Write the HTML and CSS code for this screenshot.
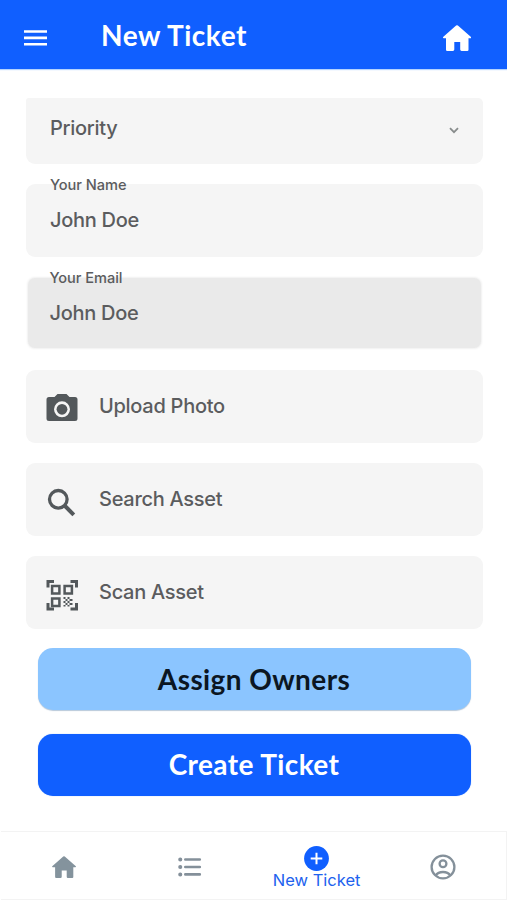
FILE: index.html
```html
<!DOCTYPE html>
<html lang="en">
<head>
<meta charset="utf-8">
<title>New Ticket</title>
<link rel="stylesheet" href="styles.css">
</head>
<body>
<header class="topbar">
  <svg class="menu" viewBox="0 0 23 16" fill="#fff"><path d="M0 .2h23v2.6H0zM0 6.6h23v2.6H0zM0 13h23v2.6H0z"/></svg>
  <h1 class="title">New Ticket</h1>
  <svg class="home" viewBox="0 0 28 26"><path fill="#fff" d="M13.1.6Q14 0 14.9.6L28 12.1Q28.5 13 27.4 13.2H25.5V24.8Q25.5 26 24.3 26H18.6Q17.2 26 17.2 24.6V17H11.3V24.6Q11.3 26 9.9 26H4.2Q3 26 3 24.8V13.2H.7Q-.4 13 .1 12.1Z"/></svg>
</header>
<main class="form">
  <div class="field select"><span>Priority</span>
    <svg class="chevron" viewBox="0 0 10 7"><path d="M1 1.2l4 4 4-4" fill="none" stroke="#888c8c" stroke-width="1.8"/></svg>
  </div>
  <div class="field"><label class="label">Your Name</label><span>John Doe</span></div>
  <div class="field active"><label class="label">Your Email</label><span>John Doe</span></div>
  <div class="field action upload">
    <svg class="icon" viewBox="0 0 32 32" fill="#53585b"><path fill-rule="evenodd" d="M11.5 2h9l3 3H29a2.500 2.500 0 0 1 2.500 2.500v19a2.500 2.500 0 0 1-2.500 2.500H3a2.500 2.500 0 0 1-2.500-2.500v-19A2.500 2.500 0 0 1 3 5h5.500zM16 9.300a8 8 0 1 0 0 16 8 8 0 0 0 0-16z"/><circle cx="16" cy="17.300" r="5.400"/></svg>
    <span>Upload Photo</span>
  </div>
  <div class="field action search">
    <svg class="icon" viewBox="0 0 32 32" fill="none" stroke="#53585b"><circle cx="12.300" cy="12.300" r="8.800" stroke-width="3.300"/><path d="M18.500 18.500l9.300 9.300" stroke-width="4"/></svg>
    <span>Search Asset</span>
  </div>
  <div class="field action scan">
    <svg class="icon" viewBox="0 0 32 32" fill="none" stroke="#53585b"><path stroke-width="3" d="M2 8.500V2.500h6M24.500 2.500h6v6M2 24v6h6M24.500 30h6v-6"/><path stroke-width="2.500" d="M6.100 7.100h7.300v7.300H6.100zM18.600 7.100h7.300v7.300h-7.300zM6.100 19.600h7.300v7.300H6.100z"/><path fill="#53585b" stroke="none" d="M17.500 18h2v2h-2zM21.500 18h2v2h-2zM19.500 20h2v2h-2zM23.500 20h3v2h-3zM17.500 22h2v2h-2zM21.500 22h2v2h-2zM19.500 24h2v2h-2zM23.500 24h3v2h-3zM17.500 26h2v1.500h-2zM21.500 26h2v1.500h-2z"/></svg>
    <span>Scan Asset</span>
  </div>
  <button class="button assign">Assign Owners</button>
  <button class="button create">Create Ticket</button>
</main>
<nav class="tabs">
  <div class="tab"><svg class="tab-home" viewBox="0 0 28 26"><path fill="#84939d" d="M13.100.6Q14 0 14.900.6L28 12.100Q28.500 13 27.400 13.200H25V24.800Q25 26 23.800 26H18.600Q17.200 26 17.200 24.600V17H11.300V24.600Q11.300 26 9.900 26H4.700Q3.500 26 3.500 24.800V13.200H.7Q-.4 13 .1 12.100Z"/></svg></div>
  <div class="tab"><svg class="tab-list" viewBox="0 0 24 20" fill="none" stroke="#84909a" stroke-linecap="round"><path stroke-width="2.600" d="M7.300 2.500h14.500M7.300 10h14.500M7.300 17.400h14.500"/><path stroke-width="4" d="M2.200 2.500h.1M2.200 10h.1M2.200 17.400h.1"/></svg></div>
  <div class="tab current"><svg class="tab-plus" viewBox="0 0 25 25"><circle cx="12.500" cy="12.500" r="12.400" fill="#105fff"/><path d="M12.500 6.700v11.600M6.700 12.500h11.600" stroke="#fff" stroke-width="2"/></svg><span>New Ticket</span></div>
  <div class="tab"><svg class="tab-user" viewBox="0 0 26 26" fill="none" stroke="#84909a" stroke-width="2.300"><circle cx="13" cy="13" r="11.400"/><circle cx="13" cy="9.700" r="3.400"/><path d="M5.500 21.500q2.500-3.500 7.500-3.500t7.500 3.500"/></svg></div>
</nav>
</body>
</html>
```
FILE: styles.css
```css
* { box-sizing: border-box; }
body {
  margin: 0;
  height: 900px;
  display: flex;
  flex-direction: column;
  background: #fff;
  color: #5b5c5e;
  font: 500 20px/24px Inter, sans-serif;
  letter-spacing: -.28px;
  overflow: hidden;
}
svg { display: block; flex: none; }
.topbar {
  height: 69px;
  flex: none;
  display: flex;
  align-items: flex-start;
  padding: 0 36px 0 23.500px;
  background: #105fff;
  box-shadow: 0 1px 1px #b5d4ff;
}
.menu { width: 23px; height: 16px; margin-top: 30px; }
.title {
  margin: 18px auto 0 54.500px;
  color: #fff;
  font: 700 28px/34px Lato, sans-serif;
  letter-spacing: .55px;
  white-space: nowrap;
}
.home { width: 28px; height: 26px; margin-top: 25px; }
.form {
  flex: 1;
  padding: 29px 24px 0 25.500px;
  display: flex;
  flex-direction: column;
}
.field {
  position: relative;
  flex: none;
  height: 73px;
  margin-bottom: 20px;
  padding: 24px 24px 0 24.500px;
  border-radius: 9px;
  background: #f5f5f5;
}
.select {
  height: 66px;
  padding-top: 18px;
  display: flex;
  justify-content: space-between;
  border-radius: 3px 5px 9px 9px;
}
.chevron { width: 10px; height: 7px; margin-top: 11px; }
.label {
  position: absolute;
  top: -8px;
  left: 24.500px;
  font-size: 14.600px;
  line-height: 18px;
  letter-spacing: -.05px;
}
.active {
  height: 70px;
  margin: 1px 2px 22px 2px;
  padding: 23px 22px 0;
  border-radius: 7px;
  background: #eaeaea;
  box-shadow: 0 0 2px 1px #f1f1f1;
}
.active .label { left: 22px; top: -9px; }
.action {
  display: flex;
  padding: 24px 20.500px 0;
  gap: 21px;
}
.icon { width: 32px; height: 32px; margin-top: -2px; }
.search .icon { margin-top: 0; }
.scan .icon { margin-top: -1px; }
.scan { margin-bottom: 19px; }
.button {
  flex: none;
  width: 433px;
  height: 62px;
  margin: 0 0 23.500px 12px;
  padding: 0 0 1px;
  border: 0;
  border-radius: 15px;
  font: 700 28px/34px Lato, sans-serif;
  letter-spacing: .4px;
}
.assign { background: #8bc5ff; color: #0b1622; box-shadow: 0 1px 1px #b9c9da; }
.create { background: #105fff; color: #fff; box-shadow: 0 0 1px #7ba9ff; }
.tabs {
  height: 69px;
  flex: none;
  display: grid;
  grid-template-columns: repeat(4, 1fr);
  margin-left: 1px;
  border: 1px solid #f3f3f3;
  border-left: 0;
}
.tab {
  display: flex;
  flex-direction: column;
  align-items: center;
  padding-top: 24px;
}
.tab-home { width: 24px; height: 22px; }
.tab-list { width: 24px; height: 20px; margin-top: 1px; }
.current { padding-top: 14px; color: #2162ee; font: 400 16.500px/20px Inter, sans-serif; letter-spacing: 0; white-space: nowrap; }
.current span { margin-top: -1px; }
.tab-plus { width: 25px; height: 25px; }
.tab-user { width: 26px; height: 26px; margin-top: -2px; }
```
